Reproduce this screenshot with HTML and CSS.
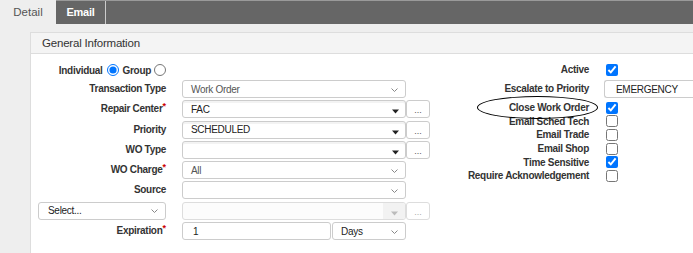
FILE: index.html
```html
<!DOCTYPE html>
<html>
<head>
<meta charset="utf-8">
<link rel="stylesheet" href="styles.css">
</head>
<body>
<div class="tabs">
  <div class="tab tab-active">Detail</div>
  <div class="tab tab-email">Email</div>
</div>
<div class="content">
  <div class="panel">
    <div class="panel-head">General Information</div>
    <div class="panel-body">
      <div class="form-left">
        <div class="radio-row">
          <span>Individual</span><input type="radio" name="who" class="radio r1" checked>
          <span class="g">Group</span><input type="radio" name="who" class="radio r2">
        </div>
        <div class="row-fill"></div>

        <div class="lbl">Transaction Type</div>
        <div class="box sel span2"><span class="val muted">Work Order</span><svg class="chev" width="7" height="4" viewBox="0 0 7 4"><path d="M0.5 0.5L3.5 3.5L6.5 0.5" fill="none" stroke="#888"/></svg></div>

        <div class="lbl">Repair Center<span class="req">*</span></div>
        <div class="box combo"><span class="val">FAC</span><svg class="tri" width="7" height="5" viewBox="0 0 7 5"><path d="M0 0.5H7L3.5 4.5Z" fill="#222"/></svg></div>
        <div class="box btn">...</div>

        <div class="lbl">Priority</div>
        <div class="box combo"><span class="val">SCHEDULED</span><svg class="tri" width="7" height="5" viewBox="0 0 7 5"><path d="M0 0.5H7L3.5 4.5Z" fill="#222"/></svg></div>
        <div class="box btn">...</div>

        <div class="lbl">WO Type</div>
        <div class="box combo"><span class="val"></span><svg class="tri" width="7" height="5" viewBox="0 0 7 5"><path d="M0 0.5H7L3.5 4.5Z" fill="#222"/></svg></div>
        <div class="box btn">...</div>

        <div class="lbl">WO Charge<span class="req">*</span></div>
        <div class="box sel span2"><span class="val muted">All</span><svg class="chev" width="7" height="4" viewBox="0 0 7 4"><path d="M0.5 0.5L3.5 3.5L6.5 0.5" fill="none" stroke="#888"/></svg></div>

        <div class="lbl">Source</div>
        <div class="box sel span2"><span class="val"></span><svg class="chev" width="7" height="4" viewBox="0 0 7 4"><path d="M0.5 0.5L3.5 3.5L6.5 0.5" fill="none" stroke="#888"/></svg></div>

        <div class="lbl-cell"><div class="box sel small"><span class="val">Select...</span><svg class="chev" width="7" height="4" viewBox="0 0 7 4"><path d="M0.5 0.5L3.5 3.5L6.5 0.5" fill="none" stroke="#888"/></svg></div></div>
        <div class="box combo disabled"><span class="val"></span><span class="tri-area"><svg width="7" height="5" viewBox="0 0 7 5"><path d="M0 0.5H7L3.5 4.5Z" fill="#bbb"/></svg></span></div>
        <div class="box btn btn-disabled">...</div>

        <div class="lbl">Expiration<span class="req">*</span></div>
        <div class="exp span2">
          <div class="box num"><span class="val">1</span></div>
          <div class="box sel days"><span class="val">Days</span><svg class="chev" width="7" height="4" viewBox="0 0 7 4"><path d="M0.5 0.5L3.5 3.5L6.5 0.5" fill="none" stroke="#888"/></svg></div>
        </div>
      </div>

      <div class="form-right">
        <div class="rlbl r-first">Active</div>
        <div class="rctl r-first"><input type="checkbox" class="cb" checked></div>

        <div class="rlbl r-sel">Escalate to Priority</div>
        <div class="rctl r-sel"><div class="box esc"><span class="val">EMERGENCY</span></div></div>

        <div class="rlbl">Close Work Order</div>
        <div class="rctl"><input type="checkbox" class="cb" checked></div>

        <div class="rlbl">Email Sched Tech</div>
        <div class="rctl"><input type="checkbox" class="cb"></div>

        <div class="rlbl">Email Trade</div>
        <div class="rctl"><input type="checkbox" class="cb"></div>

        <div class="rlbl">Email Shop</div>
        <div class="rctl"><input type="checkbox" class="cb"></div>

        <div class="rlbl">Time Sensitive</div>
        <div class="rctl"><input type="checkbox" class="cb" checked></div>

        <div class="rlbl">Require Acknowledgement</div>
        <div class="rctl"><input type="checkbox" class="cb"></div>

        <div class="ellipse"></div>
      </div>
    </div>
  </div>
</div>
</body>
</html>
```

FILE: styles.css
```css
* { box-sizing: border-box; }
html, body { margin: 0; padding: 0; }
body {
  width: 693px;
  height: 253px;
  overflow: hidden;
  background: #eee;
  font-family: "Liberation Sans", Arial, sans-serif;
  color: #333;
}
.tabs {
  display: flex;
  height: 24px;
  background: #666;
  border-top: 1px solid #9a9a9a;
}
.tab {
  height: 23px;
  line-height: 23px;
  font-size: 11px;
  text-align: center;
}
.tab-active {
  width: 56px;
  background: #eee;
  color: #555;
  margin-top: -1px;
  height: 24px;
  line-height: 25px;
  font-size: 11.5px;
}
.tab-email {
  width: 50px;
  color: #fff;
  font-weight: bold;
  letter-spacing: -0.3px;
  border-right: 1px solid #ccc;
}
.content { padding: 8px 0 0 30px; }
.panel {
  width: 663px;
  height: 221px;
  overflow: hidden;
  background: #fff;
  border: 1px solid #ddd;
  border-right: none;
  border-bottom: none;
}
.panel-head {
  height: 21px;
  line-height: 20px;
  padding-left: 11px;
  background: #f4f4f4;
  border-bottom: 1px solid #ddd;
  font-size: 11.5px;
  letter-spacing: -0.2px;
  color: #333;
}
.panel-body {
  display: flex;
  gap: 30px;
  padding: 9px 0 0 7px;
  font-size: 10px;
}
.form-left {
  flex: none;
  display: grid;
  grid-template-columns: 144px 224px 24px;
  grid-template-rows: 17px repeat(8, 20.3px);
  align-items: start;
}
.radio-row {
  display: flex;
  align-items: center;
  justify-content: flex-end;
  padding-right: 16px;
  height: 14px;
  font-weight: bold;
  letter-spacing: -0.3px;
}
.row-fill { grid-column: span 2; }
.radio {
  width: 12px;
  height: 12px;
  margin: 0;
}
.r1 { margin-left: 4px; }
.g { margin-left: 4px; }
.r2 { margin-left: 3px; }
.lbl {
  text-align: right;
  padding-right: 16px;
  font-weight: bold;
  line-height: 17px;
  letter-spacing: -0.3px;
  white-space: nowrap;
}
.req {
  color: #c00;
  font-size: 9px;
  vertical-align: top;
  line-height: 13px;
  letter-spacing: 0;
}
.lbl-cell { display: flex; }
.span2 { grid-column: span 2; }
.box {
  height: 18px;
  border: 1px solid #ccc;
  border-radius: 3px;
  background: #fff;
  display: flex;
  align-items: center;
  padding-left: 8px;
  font-size: 10px;
  letter-spacing: -0.3px;
  color: #222;
  white-space: nowrap;
  overflow: hidden;
}
.sel { width: 224px; padding-right: 7px; }
.val { flex: 1; }
.muted { color: #555; }
.chev { flex: none; margin-top: 1px; }
.combo { width: 224px; padding-right: 6px; box-shadow: inset 0 2px 0 #f3f3f3; }
.tri { flex: none; align-self: flex-end; margin-bottom: 3px; }
.btn {
  width: 24px;
  padding: 0;
  justify-content: center;
  align-items: flex-end;
  line-height: 10px;
  color: #555;
  font-size: 9px;
  letter-spacing: 0;
  padding-bottom: 2px;
}
.btn-disabled { color: #aaa; border-color: #ddd; }
.disabled { padding-right: 0; background: #fcfcfc; border-color: #ddd; box-shadow: none; }
.tri-area {
  flex: none;
  width: 22px;
  height: 100%;
  background: #f2f2f2;
  display: flex;
  justify-content: center;
  align-items: flex-end;
  padding-bottom: 3px;
}
.small { width: 128px; padding-left: 9px; }
.exp { display: flex; gap: 1px; }
.num { width: 149px; padding-left: 10px; }
.days { width: 74px; }
.form-right {
  flex: none;
  position: relative;
  display: grid;
  grid-template-columns: 144px 89px;
  grid-template-rows: 17px 21px repeat(6, 13.6px);
  align-items: center;
}
.rlbl {
  text-align: right;
  padding-right: 15px;
  font-weight: bold;
  letter-spacing: -0.3px;
  line-height: 13px;
  white-space: nowrap;
}
.rctl { display: flex; align-items: center; }
.r-first { align-self: start; line-height: 14px; }
.rctl.r-first { padding-top: 1px; }
.r-sel { align-self: start; }
.rlbl.r-sel { line-height: 17px; }
.cb {
  width: 12px;
  height: 12px;
  margin: 0 0 0 2px;
}
.esc { width: 89px; padding-left: 11px; border-right: none; border-radius: 3px 0 0 3px; }
.ellipse {
  position: absolute;
  left: 17px;
  top: 33px;
  width: 121px;
  height: 23px;
  border: 1px solid #000;
  border-radius: 50%;
}
```
